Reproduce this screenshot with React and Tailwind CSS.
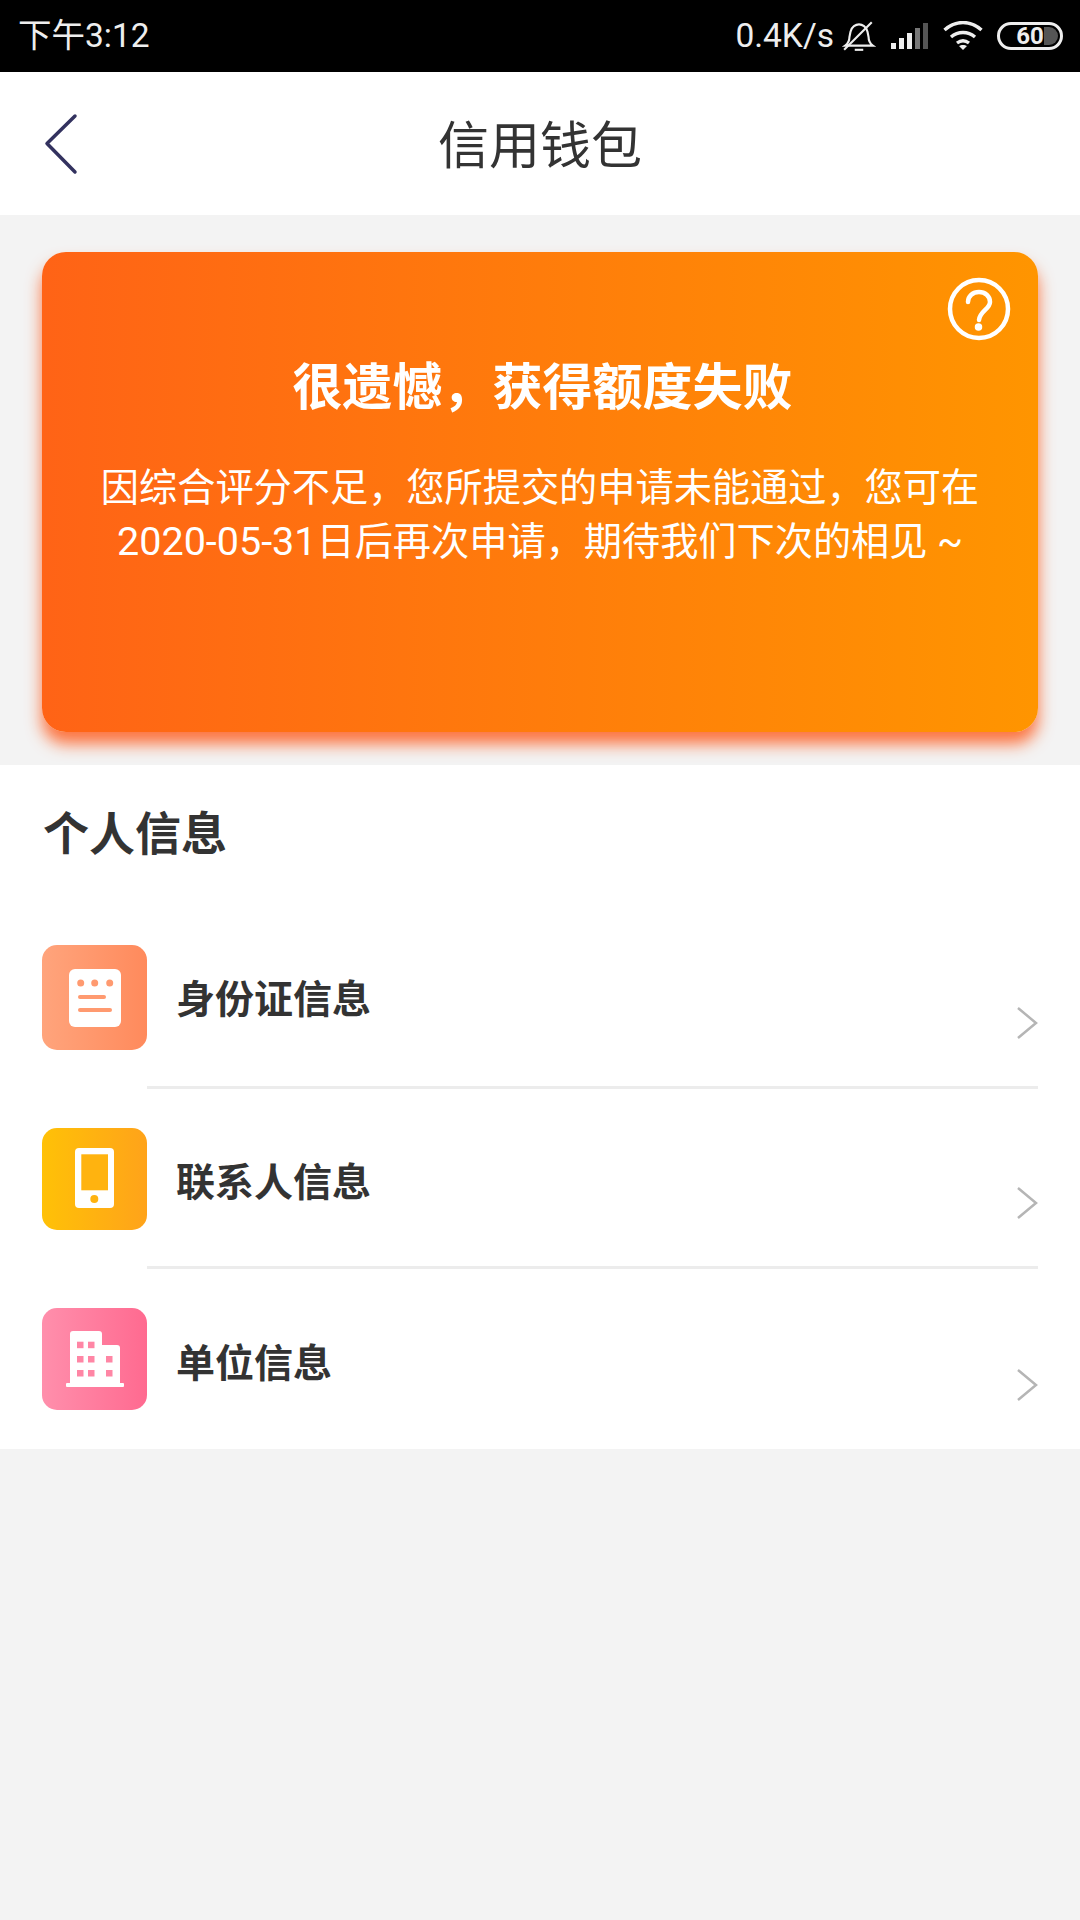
import React from "react";

const rows = [
  { name: "身份证信息", icon: <IdIcon />, bg: "bg-linear-to-r/srgb from-[#ffa47c] to-[#ff8a5c]", h: "h-[105px]", pt: "pt-[32px]", chevron: "mt-[61px]" },
  { name: "联系人信息", icon: <PhoneIcon />, bg: "bg-linear-to-r/srgb from-[#ffc107] to-[#ffa31a]", h: "h-[102px]", pt: "pt-[32px]", chevron: "mt-[58px]" },
  { name: "单位信息", icon: <BuildingIcon />, bg: "bg-linear-to-r/srgb from-[#ff8fac] to-[#ff6a90]", h: "h-[102px]", pt: "pt-[33px]", chevron: "mt-[60px]" },
];

function IdIcon() {
  return (
    <svg width="52" height="58" viewBox="0 0 52 58">
      <rect x="0" y="0" width="52" height="58" rx="6" fill="#fff" />
      <circle cx="11.700" cy="14" r="3.500" fill="#ff9a70" />
      <circle cx="25.700" cy="14" r="3.500" fill="#ff9a70" />
      <circle cx="40.700" cy="14" r="3.500" fill="#ff9a70" />
      <rect x="9" y="26" width="28" height="4" rx="2" fill="#ff9a70" />
      <rect x="9" y="39" width="34" height="4" rx="2" fill="#ff9a70" />
    </svg>
  );
}

function PhoneIcon() {
  return (
    <svg className="-mt-[3px]" width="39" height="60" viewBox="0 0 39 60">
      <rect x="0" y="0" width="39" height="60" rx="4" fill="#fff" />
      <rect x="6.300" y="6.300" width="26.700" height="36" fill="#ffb30f" />
      <circle cx="19.300" cy="51" r="4" fill="#ffb30f" />
    </svg>
  );
}

function BuildingIcon() {
  return (
    <svg width="58" height="57" viewBox="0 0 58 57">
      <path d="M4 3a3 3 0 0 1 3-3h26a3 3 0 0 1 3 3v11h15a3 3 0 0 1 3 3v36H4z" fill="#fff" />
      <rect x="0" y="52" width="58" height="4" rx="1" fill="#fff" />
      {[[11, 10.700], [22, 10.700], [11, 25], [22, 25], [40, 25], [11, 39], [22, 39], [40, 39]].map(([x, y], i) => (
        <rect key={i} x={x} y={y} width="6.500" height="6.500" fill="#ff86a5" />
      ))}
    </svg>
  );
}

function Chevron() {
  return (
    <svg width="22" height="34" viewBox="0 0 22 34" fill="none">
      <path d="M2 2l18 15L2 32" stroke="#b5b5b5" strokeWidth="2.500" />
    </svg>
  );
}

function StatusIcons() {
  return (
    <div className="flex items-center">
      <svg width="34" height="34" viewBox="0 0 32 32" fill="none" stroke="#eee" strokeWidth="2">
        <path d="M3 25c3-2 4-4 4-8l1-5c1-5 5-7 8-7s7 2 8 7l1 5c0 4 1 6 4 8z" />
        <path d="M12 29h8" />
        <path d="M2 29L28 3" />
      </svg>
      <svg className="ml-[15px]" width="38" height="28" viewBox="0 0 38 28">
        <rect x="0" y="21" width="5" height="6" fill="#eee" />
        <rect x="8" y="16" width="5" height="11" fill="#eee" />
        <rect x="16" y="11" width="5" height="16" fill="#eee" />
        <rect x="24" y="6" width="5" height="21" fill="#777" />
        <rect x="32" y="1" width="5" height="26" fill="#555" />
      </svg>
      <svg className="ml-[14px]" width="40" height="30" viewBox="0 0 40 30" fill="none" stroke="#eee" strokeWidth="3.400">
        <path d="M1.500 9c11-10 26-10 37 0" />
        <path d="M8 16c7-6 17-6 24 0" />
        <path d="M14 22c4-3 8-3 12 0" />
        <path d="M20 29l-4-4c2-1.500 6-1.500 8 0z" fill="#eee" stroke="none" />
      </svg>
      <div className="ml-[14px] relative w-[66px] h-[28px] rounded-full border-[3px] border-[#eee] overflow-hidden">
        <div className="absolute left-[44px] right-[2px] top-[2px] bottom-[2px] rounded-r-full bg-[#555]" />
        <div className="absolute inset-0 flex items-center justify-center text-[#eee] text-[24px] font-bold leading-none">60</div>
      </div>
    </div>
  );
}

export default function App() {
  return (
    <div className="w-[1080px] h-[1920px] bg-[#f3f3f3] font-['Roboto','Noto_Sans_CJK_SC',sans-serif] overflow-hidden">
      <div className="h-[72px] bg-black flex items-center justify-between pl-[18px] pr-[17px] text-[#eee] text-[33.5px]">
        <span>下午3:12</span>
        <div className="flex items-center">
          <span className="mr-[8px]">0.4K/s</span>
          <StatusIcons />
        </div>
      </div>

      <div className="relative h-[143px] bg-white flex items-center justify-center">
        <svg className="absolute left-[43px] top-[41px]" width="36" height="62" viewBox="0 0 36 62" fill="none">
          <path d="M32 3L4 30.500l28 28.500" stroke="#33325f" strokeWidth="3.500" strokeLinecap="round" strokeLinejoin="round" />
        </svg>
        <h1 className="text-[#333] text-[51px] leading-none pt-[6px]">信用钱包</h1>
      </div>

      <div className="pt-[37px] pb-[33px] px-[42px]">
        <div className="relative h-[480px] rounded-[24px] bg-linear-to-r/srgb from-[#ff6316] to-[#ff9500] shadow-[0_12px_16px_rgba(255,85,20,0.8)] pt-[103px] text-white text-center">
          <svg className="absolute right-[27px] top-[25px]" width="64" height="64" viewBox="0 0 64 64" fill="none" stroke="#fff" strokeWidth="4.500" strokeLinecap="round">
            <circle cx="32" cy="32" r="29" />
            <path d="M21 25c0-6 5-10 11-10s11 4 11 10c0 7-10 9-11 18" />
            <circle cx="31.500" cy="50" r="1.500" fill="#fff" />
          </svg>
          <h2 className="text-[50px] font-bold leading-[66px] pl-[5px]">很遗憾{"\uFF0C"}获得额度失败</h2>
          <p className="mt-[40px] text-[38.2px] leading-[54px]">
            因综合评分不足{"\uFF0C"}您所提交的申请未能通过{"\uFF0C"}您可在
            <br />
            <span className="text-[39.5px]">2020-05-31</span>日后再次申请{"\uFF0C"}期待我们下次的相见 ~
          </p>
        </div>
      </div>

      <div className="bg-white h-[684px] pt-[41px] px-[42px]">
        <h3 className="text-[#333] text-[46px] font-bold leading-[56px] pl-[1px]">个人信息</h3>
        <div className="mt-[83px]">
          {rows.map((r, i) => (
            <div key={r.name}>
              <div className="flex items-start">
                <div className={`w-[105px] ${r.h} rounded-[15px] ${r.bg} flex items-center justify-center`}>{r.icon}</div>
                <div className={`flex-1 ml-[29px] ${r.pt} text-[#333] text-[39px] font-bold leading-[46px]`}>{r.name}</div>
                <div className={r.chevron}>
                  <Chevron />
                </div>
              </div>
              {i < rows.length - 1 && <div className="ml-[105px] mt-[36px] mb-[39px] h-[3px] bg-[#ececec]" />}
            </div>
          ))}
        </div>
      </div>
    </div>
  );
}
